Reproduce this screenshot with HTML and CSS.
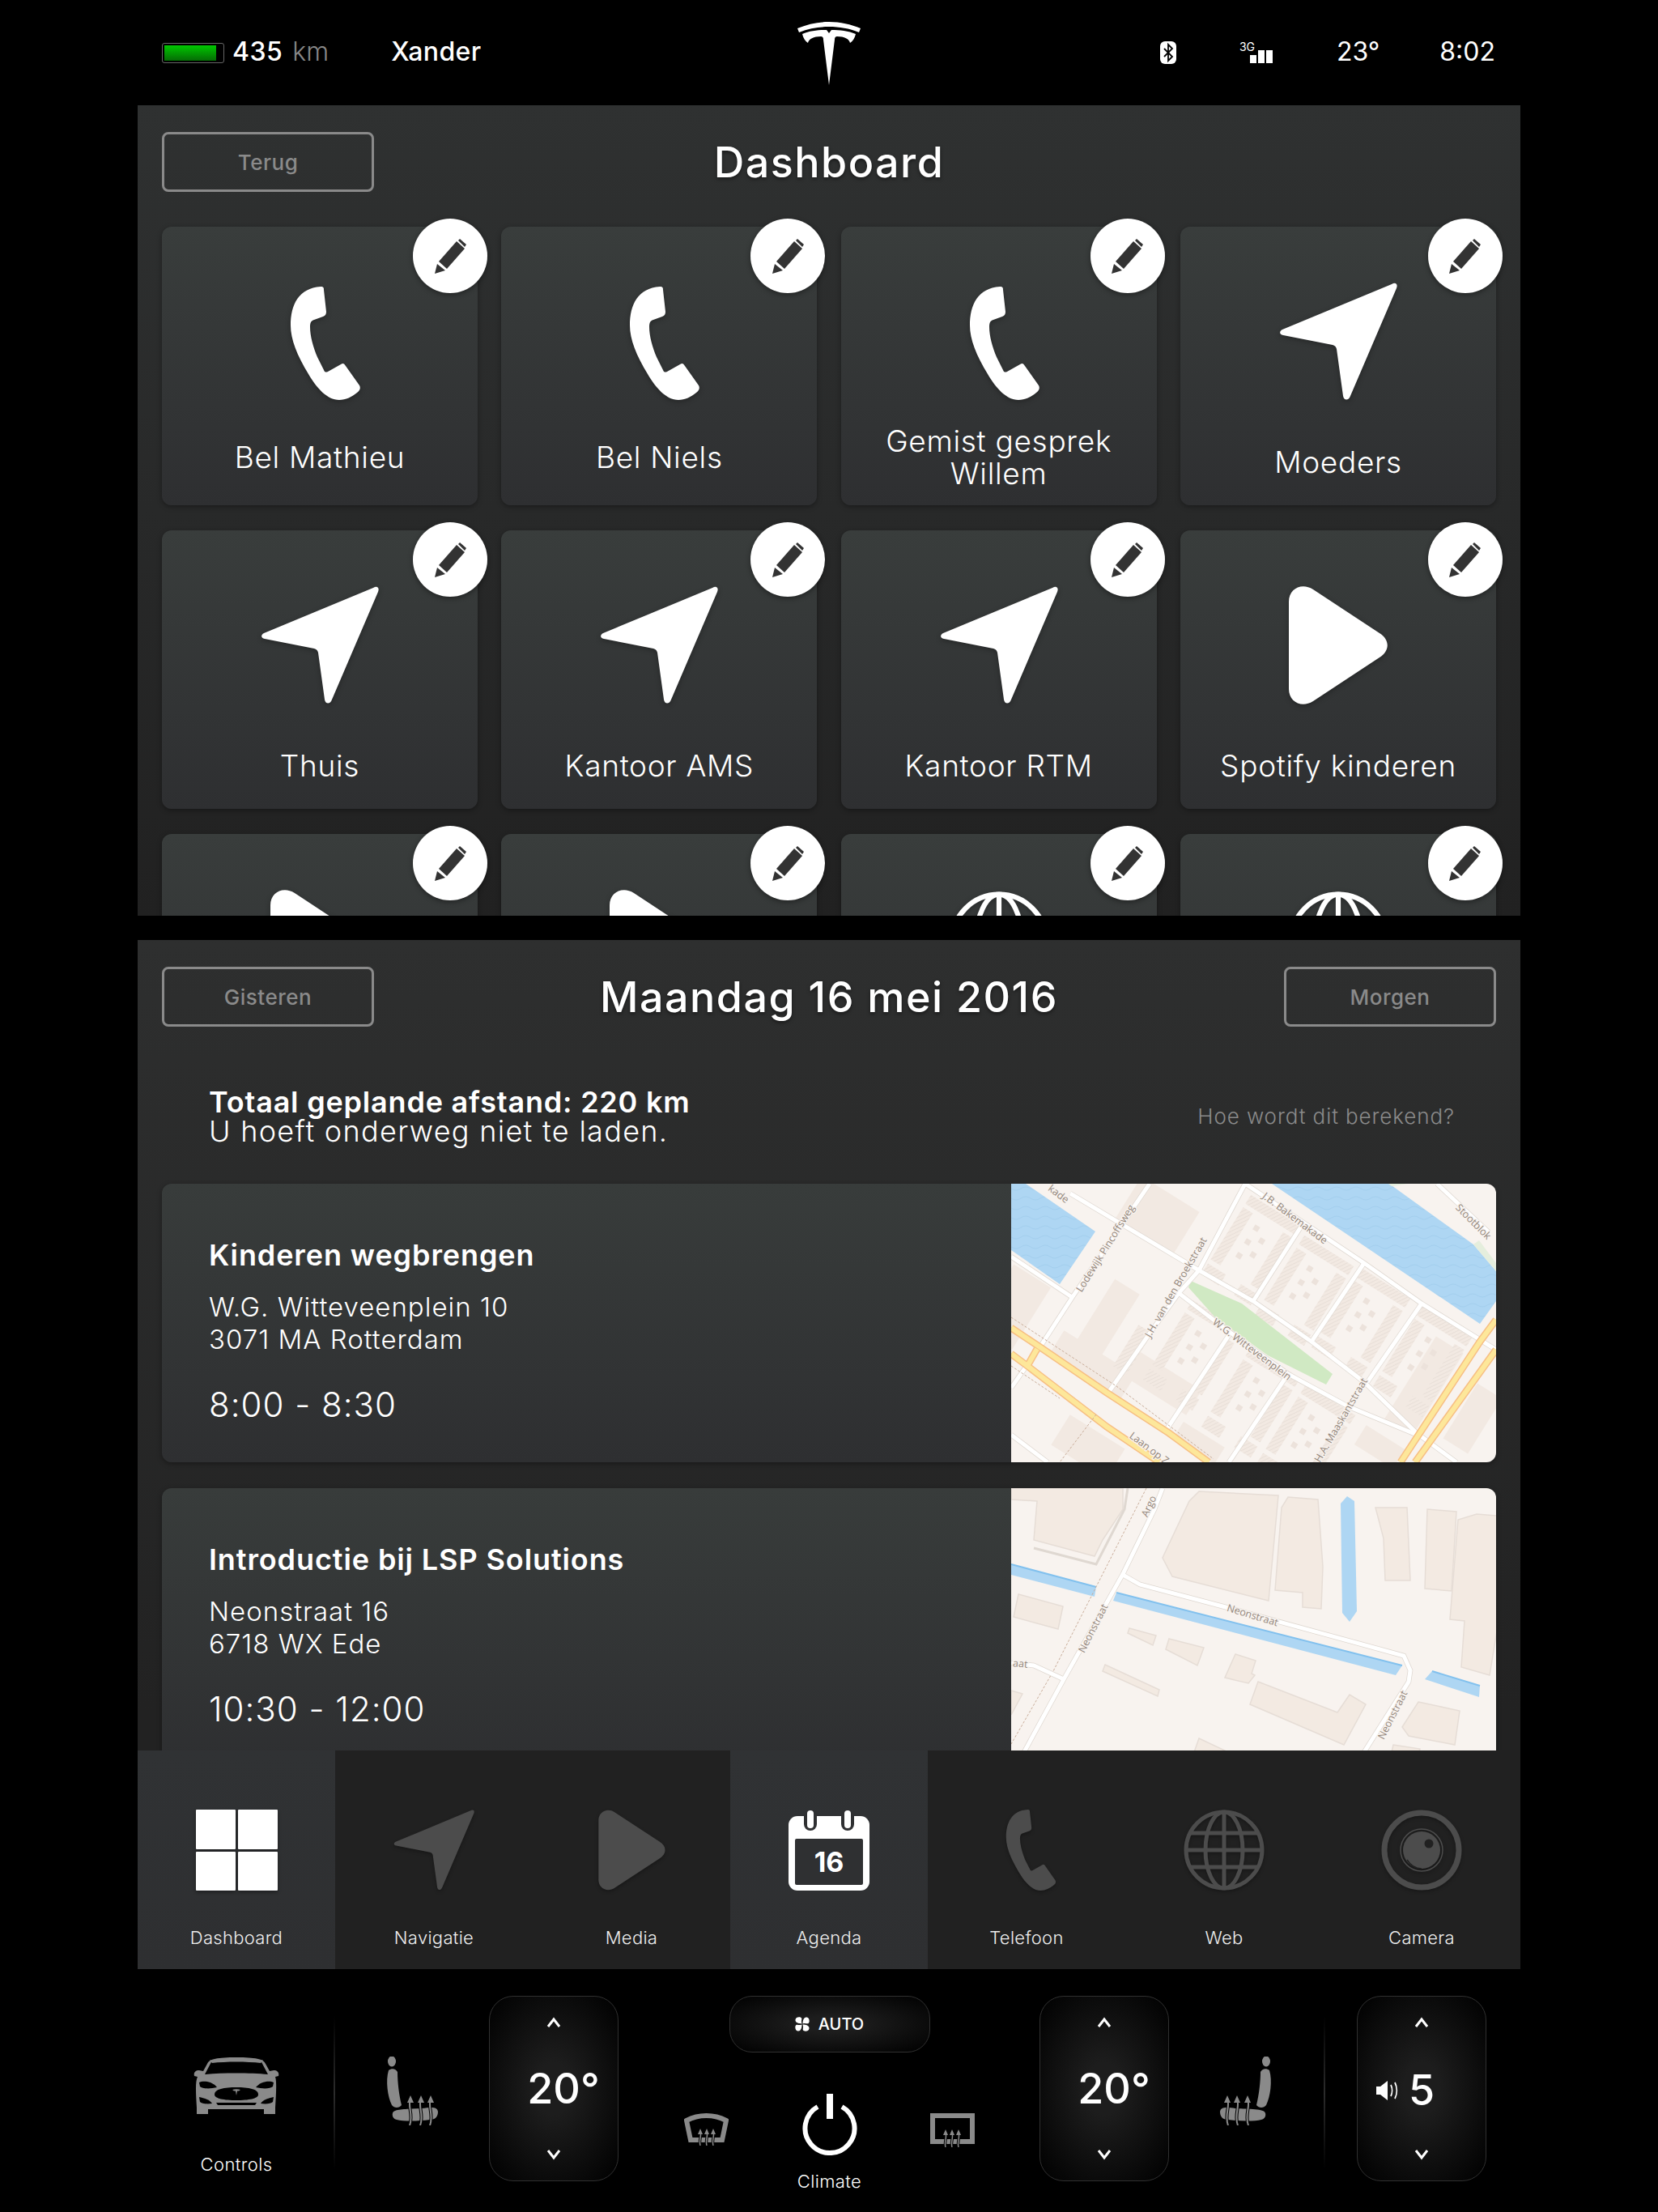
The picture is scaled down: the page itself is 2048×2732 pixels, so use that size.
FILE: index.html
```html
<!DOCTYPE html>
<html lang="nl">
<head>
    <meta charset="UTF-8">
    <meta name="viewport" content="width=device-width, initial-scale=1.0">
    <title>Dashboard</title>
    <link rel="stylesheet" href="styles.css">
</head>
<body>
    <!-- shared icons -->
    <svg class="sprite" xmlns="http://www.w3.org/2000/svg">
        <symbol id="i-phone" viewBox="-15 0 102 140">
            <path d="M37 0C41 0 41 2 41 4L44 31C44 34 43 36 40 37L29 41C25 42 24 45 24 50C24 61 28 75 33 87L41 103C42 106 44 106 46 105L62 96C65 94 66 95 68 98L85 122C87 126 85 129 82 131C76 136 68 140 60 140C45 140 32 125 22 108C8 85 0 65 0 48C0 22 10 2 37 0Z"/>
        </symbol>
        <symbol id="i-arrow" viewBox="0 0 146 146">
            <path d="M139 2C144 -1 147 2 145 7L88 140C86 146 80 146 79 140L71 82C70 79 69 78 66 77L5 65C0 64 0 60 4 58Z"/>
        </symbol>
        <symbol id="i-play" viewBox="0 0 122 148">
            <path d="M0 20C0 4 16 -4 30 5L112 59C125 67 125 81 112 89L30 143C16 152 0 144 0 128Z"/>
        </symbol>
        <symbol id="i-globe" viewBox="0 0 100 100">
            <g fill="none" stroke="currentColor" stroke-width="5">
                <circle cx="50" cy="50" r="47"/>
                <ellipse cx="50" cy="50" rx="23" ry="47"/>
                <path d="M50 3V97M3 50H97M9 29H91M9 71H91"/>
            </g>
        </symbol>
        <symbol id="i-pencil" viewBox="0 0 39 43">
            <path d="M0 43L3 31L13 39Z"/>
            <path d="M5 28L27 3L37 12L15 37Z"/>
            <path d="M29 2L31 0L39 7L37 10Z"/>
        </symbol>
        <symbol id="i-up" viewBox="0 0 18 14">
            <path d="M2 12L9 3L16 12" fill="none" stroke="#fff" stroke-width="3"/>
        </symbol>
        <symbol id="i-down" viewBox="0 0 18 14">
            <path d="M2 2L9 11L16 2" fill="none" stroke="#fff" stroke-width="3"/>
        </symbol>
        <symbol id="i-seat" viewBox="0 0 65 85">
            <ellipse cx="8" cy="6" rx="5" ry="6.5" fill="#8a8a8a"/>
            <path d="M4 17C8 14 13 15 15 19C15 32 17 48 20 60C17 64 11 64 8 60C3 50 0 30 4 17Z" fill="#8a8a8a"/>
            <path d="M9 70C10 64 30 65 45 64C55 63 64 61 65 68C65 74 62 78 55 78C40 80 22 80 14 78C10 77 8 74 9 70Z" fill="#8a8a8a"/>
            <g fill="none" stroke="#000" stroke-width="4">
                <path d="M31 52C27 62 35 72 30 85M44 52C40 62 48 72 43 85M56 52C52 62 60 72 55 85"/>
            </g>
            <g fill="none" stroke="#8a8a8a" stroke-width="2">
                <path d="M31 52C27 62 35 72 30 85M44 52C40 62 48 72 43 85M56 52C52 62 60 72 55 85"/>
            </g>
            <path d="M31 48L35 57H27ZM44 48L48 57H40ZM56 48L60 57H52Z" fill="#8a8a8a"/>
        </symbol>
    </svg>

    <header class="topbar">
        <div class="topbar-left">
            <div class="battery"><div class="battery-fill"></div></div>
            <span class="range">435</span>
            <span class="range-unit">km</span>
            <span class="driver">Xander</span>
        </div>
        <svg class="logo" viewBox="0 0 78 78" width="78" height="78">
            <path fill="#fff" d="M0 8C12 3 25 0 39 0C53 0 66 3 78 8L76 13C64 8 52 6 39 6C26 6 14 8 2 13Z"/>
            <path fill="#fff" d="M6 15C15 11 26 10 36 10L39 14L42 10C52 10 63 11 72 15C71 20 68 24 65 26C64 21 58 18 49 18C47 18 46 19 46 22L39 78L32 22C32 19 31 18 29 18C20 18 14 21 13 26C10 24 7 20 6 15Z"/>
        </svg>
        <div class="topbar-right">
            <svg class="bluetooth" viewBox="0 0 20 28" width="20" height="28">
                <rect width="20" height="28" rx="6" fill="#fff"/>
                <path d="M5 9L15 19L10 24V4L15 9L5 19" fill="none" stroke="#000" stroke-width="1.8"/>
            </svg>
            <div class="signal">
                <span class="signal-label">3G</span>
                <i class="bar"></i><i class="bar bar-tall"></i><i class="bar bar-tall"></i>
            </div>
            <span class="status-temp">23°</span>
            <span class="clock">8:02</span>
        </div>
    </header>

    <section class="panel panel-dash">
        <div class="panel-head">
            <button class="ghost-btn">Terug</button>
            <h1>Dashboard</h1>
        </div>
        <div class="tiles">
            <div class="tile tile-call">
                <span class="edit"><svg><use href="#i-pencil"/></svg></span>
                <svg class="tile-icon icon-phone"><use href="#i-phone"/></svg>
                <div class="tile-label">Bel Mathieu</div>
            </div>
            <div class="tile tile-call">
                <span class="edit"><svg><use href="#i-pencil"/></svg></span>
                <svg class="tile-icon icon-phone"><use href="#i-phone"/></svg>
                <div class="tile-label">Bel Niels</div>
            </div>
            <div class="tile tile-call">
                <span class="edit"><svg><use href="#i-pencil"/></svg></span>
                <svg class="tile-icon icon-phone"><use href="#i-phone"/></svg>
                <div class="tile-label">Gemist gesprek<br>Willem</div>
            </div>
            <div class="tile">
                <span class="edit"><svg><use href="#i-pencil"/></svg></span>
                <svg class="tile-icon icon-arrow"><use href="#i-arrow"/></svg>
                <div class="tile-label">Moeders</div>
            </div>
            <div class="tile">
                <span class="edit"><svg><use href="#i-pencil"/></svg></span>
                <svg class="tile-icon icon-arrow"><use href="#i-arrow"/></svg>
                <div class="tile-label">Thuis</div>
            </div>
            <div class="tile">
                <span class="edit"><svg><use href="#i-pencil"/></svg></span>
                <svg class="tile-icon icon-arrow"><use href="#i-arrow"/></svg>
                <div class="tile-label">Kantoor AMS</div>
            </div>
            <div class="tile">
                <span class="edit"><svg><use href="#i-pencil"/></svg></span>
                <svg class="tile-icon icon-arrow"><use href="#i-arrow"/></svg>
                <div class="tile-label">Kantoor RTM</div>
            </div>
            <div class="tile">
                <span class="edit"><svg><use href="#i-pencil"/></svg></span>
                <svg class="tile-icon icon-play"><use href="#i-play"/></svg>
                <div class="tile-label">Spotify kinderen</div>
            </div>
            <div class="tile">
                <span class="edit"><svg><use href="#i-pencil"/></svg></span>
                <svg class="tile-icon icon-play"><use href="#i-play"/></svg>
            </div>
            <div class="tile">
                <span class="edit"><svg><use href="#i-pencil"/></svg></span>
                <svg class="tile-icon icon-play"><use href="#i-play"/></svg>
            </div>
            <div class="tile">
                <span class="edit"><svg><use href="#i-pencil"/></svg></span>
                <svg class="tile-icon icon-globe"><use href="#i-globe"/></svg>
            </div>
            <div class="tile">
                <span class="edit"><svg><use href="#i-pencil"/></svg></span>
                <svg class="tile-icon icon-globe"><use href="#i-globe"/></svg>
            </div>
        </div>
    </section>

    <section class="panel panel-agenda">
        <div class="panel-head">
            <button class="ghost-btn">Gisteren</button>
            <h1>Maandag 16 mei 2016</h1>
            <button class="ghost-btn">Morgen</button>
        </div>
        <div class="summary">
            <div class="summary-text">
                <strong>Totaal geplande afstand: 220 km</strong><br>
                U hoeft onderweg niet te laden.
            </div>
            <span class="summary-link">Hoe wordt dit berekend?</span>
        </div>

        <article class="trip">
            <div class="trip-info">
                <h2>Kinderen wegbrengen</h2>
                <p class="trip-address">W.G. Witteveenplein 10<br>3071 MA Rotterdam</p>
                <p class="trip-time">8:00 - 8:30</p>
            </div>
            <svg class="map" viewBox="0 0 599 344" width="599" height="344">
                <defs>
                    <pattern id="hatch" width="4" height="4" patternUnits="userSpaceOnUse" patternTransform="rotate(32)">
                        <rect width="4" height="4" fill="#f2e9e2"/>
                        <rect width="1" height="4" fill="#e8dfd8"/>
                    </pattern>
                    <pattern id="waves" width="24" height="12" patternUnits="userSpaceOnUse">
                        <rect width="24" height="12" fill="#aed6f3"/>
                        <path d="M0 6Q6 10 12 6T24 6" fill="none" stroke="#a3cfee" stroke-width="1"/>
                    </pattern>
                    <g id="block">
                        <rect x="-36" y="-58" width="72" height="13" fill="url(#hatch)"/>
                        <rect x="-36" y="-40" width="14" height="76" fill="url(#hatch)"/>
                        <rect x="22" y="-40" width="14" height="76" fill="url(#hatch)"/>
                        <rect x="-36" y="42" width="26" height="16" fill="url(#hatch)"/>
                        <rect x="12" y="42" width="24" height="16" fill="url(#hatch)"/>
                        <rect x="-12" y="-30" width="7" height="7" fill="#ece2db"/>
                        <rect x="2" y="-20" width="7" height="7" fill="#ece2db"/>
                        <rect x="-12" y="-10" width="7" height="7" fill="#ece2db"/>
                        <rect x="2" y="0" width="7" height="7" fill="#ece2db"/>
                        <rect x="-12" y="10" width="7" height="7" fill="#ece2db"/>
                    </g>
                    <g id="m1-roads">
                        <path d="M73 12L232 107L299 145L371 195L436 245L501 308L550 344"/>
                        <path d="M289 0L436 98L507 148L599 205"/>
                        <path d="M207 135L268 182L342 235L416 275L501 310"/>
                        <path d="M0 90L75 140"/>
                        <path d="M0 252L38 198L77 138L171 0"/>
                        <path d="M120 258L171 185L207 135L232 107L289 0"/>
                        <path d="M191 305L269 187"/>
                        <path d="M269 344L340 238"/>
                        <path d="M299 145L358 53"/>
                        <path d="M371 195L436 98"/>
                        <path d="M440 245L507 148"/>
                        <path d="M526 0L590 60"/>
                        <path d="M0 310L45 344"/>
                    </g>
                    <g id="m1-main">
                        <path d="M0 178L36 202L118 258L195 308L244 344"/>
                        <path d="M0 210L20 225L118 300L183 344"/>
                        <path d="M32 204L20 225"/>
                        <path d="M599 168L579 195L481 344"/>
                        <path d="M599 205L499 344"/>
                    </g>
                </defs>
                <rect width="599" height="344" fill="#f8f3ef"/>
                <path d="M0 0H18L104 59L60 124L0 82Z" fill="url(#waves)"/>
                <path d="M322 0H467L571 75L599 108V145L579 173Z" fill="url(#waves)"/>
                <path d="M466 0L490 0L470 3Z" fill="#e5eedd"/>
                <path d="M571 75L578 70L599 98V108Z" fill="#e5eedd"/>

                <g fill="#f2e9e2">
                    <rect x="-42" y="-32" width="84" height="64" transform="translate(180 40) rotate(32)"/>
                    <rect x="-18" y="-48" width="36" height="96" transform="translate(118 168) rotate(32)"/>
                    <rect x="-52" y="-18" width="104" height="36" transform="translate(100 224) rotate(32)"/>
                    <rect x="-30" y="-12" width="60" height="24" transform="translate(232 320) rotate(32)"/>
                    <rect x="-42" y="-45" width="54" height="90" transform="translate(15 160) rotate(32)"/>
                    <rect x="-48" y="-18" width="96" height="36" transform="translate(185 245) rotate(32)"/>
                    <rect x="-60" y="-20" width="120" height="40" transform="translate(510 250) rotate(-58)"/>
                    <rect x="-28" y="-14" width="56" height="28" transform="translate(455 325) rotate(32)"/>
                    <rect x="-40" y="-18" width="80" height="36" transform="translate(570 290) rotate(-58)"/>
                    <rect x="-40" y="-22" width="80" height="44" transform="translate(95 325) rotate(32)"/>
                </g>
                <rect x="-10" y="-30" width="20" height="60" fill="url(#hatch)" transform="translate(150 205) rotate(32)"/>
                <use href="#block" transform="translate(296 82) rotate(32)"/>
                <use href="#block" transform="translate(362 132) rotate(32)"/>
                <use href="#block" transform="translate(432 172) rotate(32)"/>
                <use href="#block" transform="translate(508 220) rotate(32)"/>
                <use href="#block" transform="translate(224 212) rotate(32)"/>
                <use href="#block" transform="translate(296 270) rotate(32)"/>
                <use href="#block" transform="translate(364 316) rotate(32)"/>

                <path d="M222 120L285 148L397 235L389 248L317 212L252 165L219 128Z" fill="#d0e9c3"/>

                <use href="#m1-roads" class="road-case"/>
                <use href="#m1-roads" class="road-fill"/>
                <use href="#m1-main" class="main-case"/>
                <use href="#m1-main" class="main-fill"/>
                <path d="M0 165L130 250L250 340M0 225L60 265" class="rail"/>
                <path d="M105 285L60 344" class="rail"/>

                <text class="map-label" transform="translate(348 46) rotate(37)">J.B. Bakemakade</text>
                <text class="map-label" transform="translate(120 82) rotate(-58)">Lodewijk Pincoffsweg</text>
                <text class="map-label" transform="translate(207 130) rotate(-60)">J.H. van den Broekstraat</text>
                <text class="map-label" transform="translate(295 208) rotate(37)">W.G. Witteveenplein</text>
                <text class="map-label" transform="translate(411 294) rotate(-60)">H.A. Maaskantstraat</text>
                <text class="map-label" transform="translate(168 330) rotate(37)">Laan op Z</text>
                <text class="map-label" transform="translate(568 50) rotate(45)">Stootblok</text>
                <text class="map-label" transform="translate(56 16) rotate(37)">kade</text>
            </svg>
        </article>

        <article class="trip">
            <div class="trip-info">
                <h2>Introductie bij LSP Solutions</h2>
                <p class="trip-address">Neonstraat 16<br>6718 WX Ede</p>
                <p class="trip-time">10:30 - 12:00</p>
            </div>
            <svg class="map" viewBox="0 0 599 344" width="599" height="344">
                <rect width="599" height="344" fill="#f8f3ef"/>
                <g fill="#f3eae2" stroke="#e6ddd6" stroke-width="1.5">
                    <path d="M232 4L330 9L318 139L199 109L187 86L220 16Z"/>
                    <path d="M342 11L379 14L385 97L383 149L360 147L360 129L326 126L334 24Z"/>
                    <path d="M450 24L489 24L493 114L462 114L460 62Z"/>
                    <path d="M514 26L550 29L544 127L511 124Z"/>
                    <path d="M575 32L600 34V176L591 231L556 221L560 164L542 162L552 39Z"/>
                    <path d="M0 14L32 16L28 64L103 84L113 64L138 26V0H0Z"/>
                    <path d="M9 131L64 146L58 174L3 159Z"/>
                    <path d="M146 173L179 182L175 194L144 179Z"/>
                    <path d="M195 186L238 197L230 219L191 199Z"/>
                    <path d="M277 205L302 213L297 229L301 231L293 241L264 234Z"/>
                    <path d="M116 218L183 249L181 257L113 226Z"/>
                    <path d="M305 239L403 277L418 255L438 267L411 317L295 267Z"/>
                    <path d="M503 264L554 275L548 317L491 306L483 295Z"/>
                    <path d="M232 309L268 326H226Z"/>
                    <path d="M472 317L505 322L504 326H470Z"/>
                    <path d="M0 250L14 254L0 280Z"/>
                </g>
                <g fill="#aed6f3">
                    <path d="M0 94L105 122L103 134L0 107Z"/>
                    <path d="M130 129L483 219L475 231L126 139Z"/>
                    <path d="M520 226L579 244L578 258L511 236Z"/>
                    <path d="M407 19L415 10L424 16L427 152L418 165L409 154Z"/>
                </g>
                <path d="M0 94L105 122M130 129L483 219M520 226L579 244" class="shore"/>
                <path d="M167 0L52 226L0 316" class="rail"/>
                <path d="M28 74L105 94L140 26L144 0" class="lane-thin"/>
                <g class="road-case">
                    <path d="M16 326L65 236L138 106L177 26L187 0"/>
                    <path d="M138 107L159 119L265 147L485 207L493 225L491 239L436 326"/>
                    <path d="M0 216L28 219L65 236"/>
                </g>
                <g class="road-fill">
                    <path d="M16 326L65 236L138 106L177 26L187 0"/>
                    <path d="M138 107L159 119L265 147L485 207L493 225L491 239L436 326"/>
                    <path d="M0 216L28 219L65 236"/>
                </g>
                <text class="map-label" transform="translate(174 24) rotate(-65)">Argo</text>
                <text class="map-label" transform="translate(105 175) rotate(-63)">Neonstraat</text>
                <text class="map-label" transform="translate(297 161) rotate(17)">Neonstraat</text>
                <text class="map-label" transform="translate(475 282) rotate(-63)">Neonstraat</text>
                <text class="map-label" transform="translate(11 221) rotate(5)">aat</text>
            </svg>
        </article>
    </section>

    <nav class="appbar">
        <div class="app app-active">
            <div class="icon-grid"><i></i><i></i><i></i><i></i></div>
            <span>Dashboard</span>
        </div>
        <div class="app">
            <svg class="app-icon app-arrow"><use href="#i-arrow"/></svg>
            <span>Navigatie</span>
        </div>
        <div class="app">
            <svg class="app-icon app-play"><use href="#i-play"/></svg>
            <span>Media</span>
        </div>
        <div class="app app-active">
            <svg class="app-calendar" viewBox="0 0 100 100" width="100" height="100">
                <rect y="8" width="100" height="92" rx="11" fill="#fff"/>
                <rect x="8" y="36" width="84" height="57" rx="2" fill="#2f3032"/>
                <rect x="19" y="0" width="16" height="26" rx="8" fill="#2f3032"/>
                <rect x="65" y="0" width="16" height="26" rx="8" fill="#2f3032"/>
                <rect x="23" y="1" width="8" height="22" rx="4" fill="#fff"/>
                <rect x="69" y="1" width="8" height="22" rx="4" fill="#fff"/>
                <text x="50" y="77" class="calendar-day">16</text>
            </svg>
            <span>Agenda</span>
        </div>
        <div class="app">
            <svg class="app-icon app-phone"><use href="#i-phone"/></svg>
            <span>Telefoon</span>
        </div>
        <div class="app">
            <svg class="app-icon app-globe"><use href="#i-globe"/></svg>
            <span>Web</span>
        </div>
        <div class="app">
            <svg class="app-icon app-globe" viewBox="0 0 100 100">
                <circle cx="50" cy="50" r="46" fill="none" stroke="currentColor" stroke-width="7"/>
                <circle cx="50" cy="50" r="26" fill="none" stroke="currentColor" stroke-width="1.5"/>
                <circle cx="50" cy="50" r="23" fill="currentColor"/>
                <path d="M32 62C37 70 44 73 50 73" fill="none" stroke="#212121" stroke-width="1.5"/>
                <circle cx="59" cy="42" r="5.5" fill="#212121"/>
            </svg>
            <span>Camera</span>
        </div>
    </nav>

    <footer class="controls">
        <div class="ctl-car">
            <svg viewBox="0 0 106 70" width="106" height="70">
                <path fill="#8a8a8a" d="M17 8C19 2 30 0 53 0C76 0 87 2 89 8L94 17L99 16C104 16 106 19 105 23L101 24C103 30 102 45 101 62V70H87V64H18V70H4V62C3 45 2 30 5 24L1 23C0 19 2 16 7 16L12 17Z"/>
                <path d="M23 4C40 2 66 2 83 4L92 21C70 19 36 19 14 21Z" fill="#000"/>
                <path d="M20 3.500C40 1 66 1 86 3.500L83 7C66 5 40 5 23 7Z" fill="#8a8a8a"/>
                <path d="M7 31C12 28 24 30 29 37C21 39 11 39 8 36Z" fill="#000"/>
                <path d="M99 31C94 28 82 30 77 37C85 39 95 39 98 36Z" fill="#000"/>
                <path d="M26 46C26 39 38 37 53 37C68 37 80 39 80 46C80 51 68 53 53 53C38 53 26 51 26 46Z" fill="#000"/>
                <path d="M7 49C12 50 20 52 23 57C16 58 10 57 8 55Z" fill="#000"/>
                <path d="M99 49C94 50 86 52 83 57C90 58 96 57 98 55Z" fill="#000"/>
                <path d="M28 56H78L76 59H30Z" fill="#000"/>
                <path d="M48 40C51 39 55 39 58 40L56 41.500H54L53 47L52 41.500H50Z" fill="#8a8a8a"/>
            </svg>
            <span>Controls</span>
        </div>
        <div class="divider"></div>
        <svg class="seat"><use href="#i-seat"/></svg>
        <div class="stepper stepper-left">
            <svg class="chevron"><use href="#i-up"/></svg>
            <div class="stepper-value">20°</div>
            <svg class="chevron"><use href="#i-down"/></svg>
        </div>
        <div class="climate">
            <div class="auto">
                <svg viewBox="0 0 18 18" width="18" height="18" fill="#fff">
                    <path d="M8.500 8.500C4 8.500 0 7 0.500 3.500C1 0 6.500 -0.500 8 1.500C9 3 7 5 8.500 8.500Z"/>
                    <path transform="rotate(90 9 9)" d="M8.500 8.500C4 8.500 0 7 0.500 3.500C1 0 6.500 -0.500 8 1.500C9 3 7 5 8.500 8.500Z"/>
                    <path transform="rotate(180 9 9)" d="M8.500 8.500C4 8.500 0 7 0.500 3.500C1 0 6.500 -0.500 8 1.500C9 3 7 5 8.500 8.500Z"/>
                    <path transform="rotate(270 9 9)" d="M8.500 8.500C4 8.500 0 7 0.500 3.500C1 0 6.500 -0.500 8 1.500C9 3 7 5 8.500 8.500Z"/>
                </svg>
                AUTO
            </div>
            <div class="climate-row">
                <svg class="defrost" viewBox="0 0 55 40" width="55" height="40">
                    <path d="M3 9C18 1 37 1 52 9L47 33H8Z" fill="none" stroke="#8a8a8a" stroke-width="6"/>
                    <path d="M20 40C18 33 22 28 20 22M28 40C26 33 30 28 28 22M36 40C34 33 38 28 36 22" fill="none" stroke="#000" stroke-width="3.500"/>
                    <path d="M20 40C18 33 22 28 20 22M28 40C26 33 30 28 28 22M36 40C34 33 38 28 36 22" fill="none" stroke="#8a8a8a" stroke-width="1.500"/>
                    <path d="M20 19L23 26H17ZM28 19L31 26H25ZM36 19L39 26H33Z" fill="#8a8a8a"/>
                </svg>
                <div class="power">
                    <svg viewBox="0 0 68 76" width="68" height="76">
                        <path d="M19 16A30.500 30.500 0 1 0 49 16" fill="none" stroke="#fff" stroke-width="6"/>
                        <rect x="30" y="0" width="8" height="31" fill="#fff"/>
                    </svg>
                    <span>Climate</span>
                </div>
                <svg class="defrost" viewBox="0 0 55 42" width="55" height="42">
                    <rect x="3" y="3" width="49" height="32" fill="none" stroke="#8a8a8a" stroke-width="6"/>
                    <path d="M19 42C17 36 21 30 19 24M27 42C25 36 29 30 27 24M35 42C33 36 37 30 35 24" fill="none" stroke="#000" stroke-width="3.500"/>
                    <path d="M19 42C17 36 21 30 19 24M27 42C25 36 29 30 27 24M35 42C33 36 37 30 35 24" fill="none" stroke="#8a8a8a" stroke-width="1.500"/>
                    <path d="M19 20L22 27H16ZM27 20L30 27H24ZM35 20L38 27H32Z" fill="#8a8a8a"/>
                </svg>
            </div>
        </div>
        <div class="stepper stepper-right">
            <svg class="chevron"><use href="#i-up"/></svg>
            <div class="stepper-value">20°</div>
            <svg class="chevron"><use href="#i-down"/></svg>
        </div>
        <svg class="seat seat-right"><use href="#i-seat"/></svg>
        <div class="divider divider-right"></div>
        <div class="stepper stepper-volume">
            <svg class="chevron"><use href="#i-up"/></svg>
            <div class="stepper-value">
                <svg viewBox="0 0 28 26" width="28" height="26">
                    <path fill="#fff" d="M0 8H5L14 1V25L5 18H0Z"/>
                    <path d="M18 6C20 10 20 16 18 20M23 3C26 9 26 17 23 23" fill="none" stroke="#fff" stroke-width="1.800"/>
                </svg>
                <span>5</span>
            </div>
            <svg class="chevron"><use href="#i-down"/></svg>
        </div>
    </footer>
</body>
</html>
```

FILE: styles.css
```css
* {
    box-sizing: border-box;
}
body {
    margin: 0;
    background-color: #000;
    color: #fff;
    font-family: Inter, "Noto Sans", sans-serif;
    width: 2048px;
    height: 2732px;
    overflow: hidden;
}
.sprite {
    display: none;
}

/* top status bar */
.topbar {
    height: 130px;
    margin: 0 170px;
    padding: 0 31px 0 30px;
    display: grid;
    grid-template-columns: 1fr auto 1fr;
    align-items: center;
}
.topbar-left, .topbar-right {
    display: flex;
    align-items: center;
    font-size: 32px;
    font-weight: 500;
    line-height: 36px;
    margin-top: -3px;
}
.topbar-right {
    justify-content: flex-end;
    font-weight: 400;
}
.logo {
    margin-top: 1px;
}
.battery {
    width: 77px;
    height: 25px;
    margin-top: 3px;
    padding: 2px 9px 2px 2px;
    border: 1px solid #666;
    border-radius: 3px;
    margin-right: 10px;
}
.battery-fill {
    height: 100%;
    background: linear-gradient(#00c800, #056b05);
}
.range {
    letter-spacing: 0.5px;
}
.range-unit {
    margin-left: 12px;
    color: #888;
    font-weight: 300;
}
.driver {
    margin-left: 77px;
    letter-spacing: 0.4px;
}
.bluetooth {
    margin-top: 3px;
}
.signal {
    position: relative;
    width: 41px;
    height: 25px;
    margin-left: 78px;
    margin-top: 3px;
    display: flex;
    justify-content: flex-end;
    align-items: flex-end;
    gap: 2px;
}
.signal-label {
    position: absolute;
    left: 0;
    top: -4px;
    font-size: 14px;
    line-height: 18px;
}
.bar {
    width: 8px;
    height: 10px;
    background: #fff;
}
.bar-tall {
    height: 16px;
}
.status-temp {
    margin-left: 79px;
}
.clock {
    margin-left: 74px;
}

/* content panels */
.panel {
    margin: 0 170px;
    padding: 33px 30px 0;
    height: 1001px;
    overflow: hidden;
    background: linear-gradient(#2f3131, #212121);
}
.panel-agenda {
    margin-top: 30px;
    background: linear-gradient(#2e2f2f, #222 95%);
}
.panel-head {
    display: grid;
    grid-template-columns: 262px 1fr 262px;
    align-items: center;
}
.panel-head h1 {
    margin: 0;
    text-align: center;
    font-size: 52px;
    font-weight: 500;
    letter-spacing: 1.5px;
    text-shadow: 0 2px 4px rgba(0,0,0,0.5);
}
.ghost-btn {
    height: 74px;
    border: 3px solid #8a8a8a;
    border-radius: 8px;
    background: transparent;
    color: #8a8a8a;
    font-family: inherit;
    font-size: 26px;
    font-weight: 500;
    letter-spacing: 0.5px;
}

/* dashboard tiles */
.tiles {
    margin-top: 43px;
    display: grid;
    grid-template-columns: repeat(4, 390px);
    justify-content: space-between;
    grid-auto-rows: 344px;
    row-gap: 31px;
}
.tile {
    position: relative;
    display: flex;
    flex-direction: column;
    align-items: center;
    padding-top: 68px;
    border-radius: 12px;
    background: linear-gradient(#393d3c, #2e2f31);
    box-shadow: 0 2px 6px rgba(0,0,0,0.35);
}
.tile-icon {
    flex: none;
    height: 148px;
    fill: #fff;
    color: #fff;
    filter: drop-shadow(0 2px 3px rgba(0,0,0,0.3));
}
.icon-phone {
    width: 102px;
    height: 140px;
    margin: 6px 0 2px;
}
.icon-arrow {
    width: 146px;
    height: 146px;
    margin: 1px 0;
}
.icon-play {
    width: 122px;
}
.icon-globe {
    width: 124px;
    height: 124px;
    margin-top: 3px;
}
.tile-label {
    flex: 1;
    width: 100%;
    display: flex;
    align-items: center;
    justify-content: center;
    text-align: center;
    padding-top: 22px;
    font-size: 37px;
    font-weight: 300;
    line-height: 40px;
    letter-spacing: 0.7px;
}
.tile-call .tile-label {
    padding-top: 10px;
}
.edit {
    position: absolute;
    top: -10px;
    right: -12px;
    width: 92px;
    height: 92px;
    border-radius: 50%;
    background: #fff;
    box-shadow: 0 2px 6px rgba(0,0,0,0.4);
    display: flex;
    align-items: center;
    justify-content: center;
}
.tile:nth-child(4n+2) .edit, .tile:nth-child(4n+3) .edit {
    right: -10px;
}
.tile:nth-child(4n) .edit {
    right: -8px;
}
.edit svg {
    width: 39px;
    height: 43px;
    fill: #333;
}

/* agenda */
.summary {
    height: 194px;
    padding: 27px 51px 0 58px;
    display: flex;
    align-items: center;
    justify-content: space-between;
}
.summary-text {
    font-size: 36px;
    font-weight: 300;
    line-height: 36px;
    letter-spacing: 1.3px;
}
.summary-text strong {
    font-weight: 600;
    letter-spacing: 0.8px;
}
.summary-link {
    font-size: 26px;
    font-weight: 300;
    color: #8a8a8a;
    letter-spacing: 0.9px;
}
.trip {
    height: 344px;
    margin-bottom: 32px;
    display: flex;
    justify-content: space-between;
    border-radius: 12px;
    overflow: hidden;
    background: linear-gradient(#383c3b, #2e2f31);
    box-shadow: 0 2px 6px rgba(0,0,0,0.35);
}
.trip-info {
    padding: 68px 0 0 58px;
}
.trip-info h2 {
    margin: 0;
    font-size: 36px;
    font-weight: 600;
    line-height: 40px;
    letter-spacing: 0.9px;
}
.trip-address {
    margin: 24px 0 0;
    font-size: 33px;
    font-weight: 300;
    line-height: 40px;
    letter-spacing: 1px;
}
.trip-time {
    margin: 36px 0 0;
    font-size: 42px;
    font-weight: 300;
    line-height: 50px;
    letter-spacing: 1px;
}
.map {
    flex: none;
}
.map-label {
    font-family: "Open Sans", sans-serif;
    font-size: 12.5px;
    text-anchor: middle;
    fill: #94877c;
    stroke: #f8f3ef;
    stroke-width: 2.5px;
    paint-order: stroke;
}
.road-case {
    fill: none;
    stroke: #dfd8d1;
    stroke-width: 6.5px;
}
.road-fill {
    fill: none;
    stroke: #fff;
    stroke-width: 5px;
}
.main-case {
    fill: none;
    stroke: #f7bf83;
    stroke-width: 9px;
}
.main-fill {
    fill: none;
    stroke: #fde79a;
    stroke-width: 6px;
}
.rail {
    fill: none;
    stroke: #c9ae9b;
    stroke-width: 1px;
    stroke-dasharray: 3 2;
}
.lane-thin {
    fill: none;
    stroke: #dfd8d1;
    stroke-width: 3px;
}
.shore {
    fill: none;
    stroke: #82c1ee;
    stroke-width: 2px;
}

/* app bar */
.appbar {
    margin: 0 170px;
    height: 270px;
    display: grid;
    grid-template-columns: repeat(7, 1fr);
    background: #212121;
}
.app {
    display: flex;
    flex-direction: column;
    align-items: center;
    padding-top: 73px;
    color: #4c4c4c;
    fill: #4c4c4c;
}
.app span {
    margin-top: 43px;
    color: #eee;
    font-size: 22px;
    font-weight: 300;
    line-height: 30px;
    letter-spacing: 0.3px;
}
.app-active {
    background: linear-gradient(#303234, #2e2f31);
}
.app-icon {
    width: 100px;
    height: 100px;
    filter: drop-shadow(0 2px 2px rgba(0,0,0,0.3));
}
.app-phone {
    width: 73px;
}
.app-play {
    width: 85px;
}
.icon-grid {
    width: 101px;
    height: 100px;
    display: grid;
    grid-template-columns: 1fr 1fr;
    grid-template-rows: 1fr 1fr;
    gap: 3px;
    filter: drop-shadow(0 2px 2px rgba(0,0,0,0.4));
}
.icon-grid i {
    background: #fff;
    border-radius: 1px;
}
.calendar-day {
    font-size: 34px;
    font-weight: 700;
    text-anchor: middle;
    fill: #fff;
}

/* climate controls */
.controls {
    margin: 0 170px;
    height: 300px;
    padding-top: 33px;
    display: flex;
    align-items: flex-start;
}
.ctl-car {
    width: 242px;
    padding: 76px 0 0 2px;
    display: flex;
    flex-direction: column;
    align-items: center;
}
.ctl-car span, .power span {
    font-size: 22px;
    font-weight: 300;
    line-height: 30px;
    letter-spacing: 0.4px;
}
.ctl-car span {
    margin-top: 47px;
}
.divider {
    width: 2px;
    height: 190px;
    margin-top: 25px;
    background: linear-gradient(#000, #2c2c2c 50%, #000);
}
.divider-right {
    margin-left: 63px;
}
.seat {
    flex: none;
    width: 65px;
    height: 85px;
    margin: 75px 0 0 62px;
}
.seat-right {
    margin-left: 63px;
    transform: scaleX(-1);
}
.stepper {
    flex: none;
    width: 160px;
    height: 229px;
    padding: 25px 0;
    border: 1px solid #303030;
    border-radius: 30px;
    background: radial-gradient(ellipse at center, #1d1d1d 20%, #000 100%);
    display: flex;
    flex-direction: column;
    align-items: center;
    justify-content: space-between;
}
.stepper-left {
    margin-left: 63px;
}
.stepper-right {
    margin-left: 80px;
}
.stepper-volume {
    margin-left: 39px;
}
.chevron {
    width: 18px;
    height: 14px;
}
.stepper-value {
    display: flex;
    align-items: center;
    gap: 12px;
    padding-left: 24px;
    font-size: 52px;
    font-weight: 500;
    line-height: 60px;
}
.stepper-volume .stepper-value {
    padding: 5px 40px 0 0;
}
.climate {
    flex: none;
    width: 359px;
    margin-left: 81px;
}
.auto {
    width: 248px;
    height: 70px;
    margin: 0 auto;
    border: 1px solid #303030;
    border-radius: 28px;
    background: radial-gradient(ellipse at center, #1d1d1d 20%, #000 100%);
    display: flex;
    align-items: center;
    justify-content: center;
    gap: 11px;
    font-size: 20px;
    font-weight: 500;
}
.climate-row {
    margin-top: 51px;
    display: flex;
    justify-content: space-between;
}
.defrost {
    margin-top: 24px;
}
.power {
    width: 100px;
    display: flex;
    flex-direction: column;
    align-items: center;
}
.power span {
    margin-top: 17px;
}
```
